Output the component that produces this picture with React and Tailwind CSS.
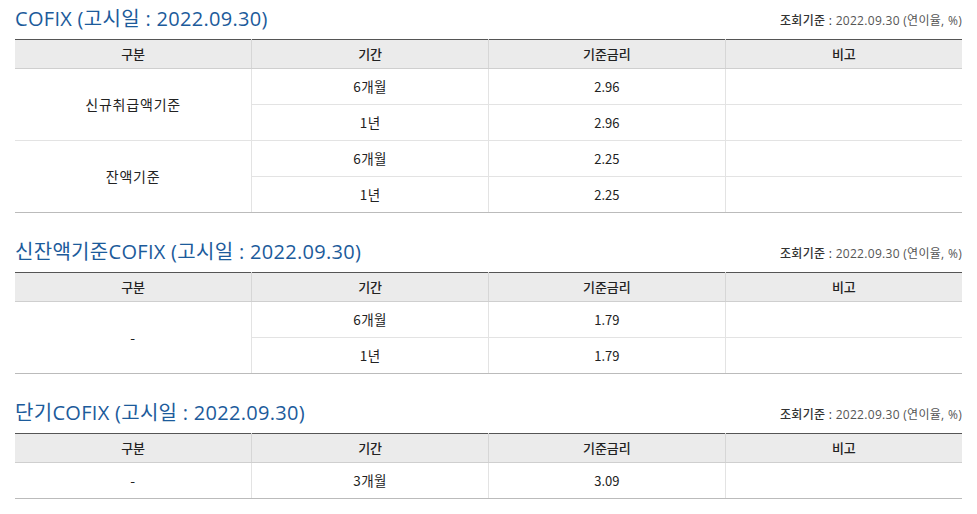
const sections = [
  {
    title: "COFIX (고시일 : 2022.09.30)",
    groups: [
      { name: "신규취급액기준", rows: [["6개월", "2.96"], ["1년", "2.96"]] },
      { name: "잔액기준", rows: [["6개월", "2.25"], ["1년", "2.25"]] },
    ],
  },
  {
    title: "신잔액기준COFIX (고시일 : 2022.09.30)",
    groups: [{ name: "-", rows: [["6개월", "1.79"], ["1년", "1.79"]] }],
  },
  {
    title: "단기COFIX (고시일 : 2022.09.30)",
    groups: [{ name: "-", rows: [["3개월", "3.09"]] }],
  },
];

function RateTable({ groups }) {
  const total = groups.reduce((n, g) => n + g.rows.length, 0);
  let idx = 0;
  return (
    <table className="w-full table-fixed border-collapse border-t border-t-[#555] text-[13px] text-[#222]">
      <thead>
        <tr className="h-[29px]">
          {["구분", "기간", "기준금리", "비고"].map((h, i) => (
            <th
              key={h}
              className={`bg-[#ebebeb] border-b border-b-[#cfcfcf] font-medium ${i > 0 ? "border-l border-l-[#d6d6d6]" : ""}`}
            >
              {h}
            </th>
          ))}
        </tr>
      </thead>
      <tbody>
        {groups.map((g) =>
          g.rows.map((r, j) => {
            idx += 1;
            const bb = idx === total ? "border-b border-b-[#bbbbbb]" : "border-b border-b-[#e3e3e3]";
            const groupEnd = idx - 1 + g.rows.length === total;
            return (
              <tr key={g.name + j} className="h-[36px]">
                {j === 0 && (
                  <td
                    rowSpan={g.rows.length}
                    className={`text-center text-[14px] tracking-[0.8px] ${groupEnd ? "border-b border-b-[#bbbbbb]" : "border-b border-b-[#e3e3e3]"}`}
                  >
                    {g.name}
                  </td>
                )}
                <td className={`text-center text-[13.5px] tracking-[0.4px] border-l border-l-[#e3e3e3] ${bb}`}>{r[0]}</td>
                <td className={`text-center border-l border-l-[#e3e3e3] ${bb}`}>{r[1]}</td>
                <td className={`border-l border-l-[#e3e3e3] ${bb}`}></td>
              </tr>
            );
          })
        )}
      </tbody>
    </table>
  );
}

export default function App() {
  return (
    <div
      className="w-[977px] h-[514px] bg-white px-[15px] overflow-hidden"
      style={{ fontFamily: '"Noto Sans CJK KR", "Noto Sans", sans-serif' }}
    >
      {sections.map((s, i) => (
        <div key={s.title} className={i > 0 ? "mt-[20px]" : ""}>
          <div className="flex items-center justify-between h-[39px] pb-[1px]">
            <h2
              className="text-[20px] leading-none text-[#1c5b9b] font-normal tracking-[0.3px]"
              style={{ fontFamily: '"Open Sans", "Noto Sans CJK KR", sans-serif' }}
            >
              {s.title}
            </h2>
            <p
              className="text-[12px] text-[#555] pt-[3px] tracking-[0.3px]"
              style={{ fontFamily: '"Open Sans", "Noto Sans CJK KR", sans-serif' }}
            >
              <span className="font-medium text-[#333]">조회기준 :</span> 2022.09.30 (연이율, %)
            </p>
          </div>
          <RateTable groups={s.groups} />
        </div>
      ))}
    </div>
  );
}
